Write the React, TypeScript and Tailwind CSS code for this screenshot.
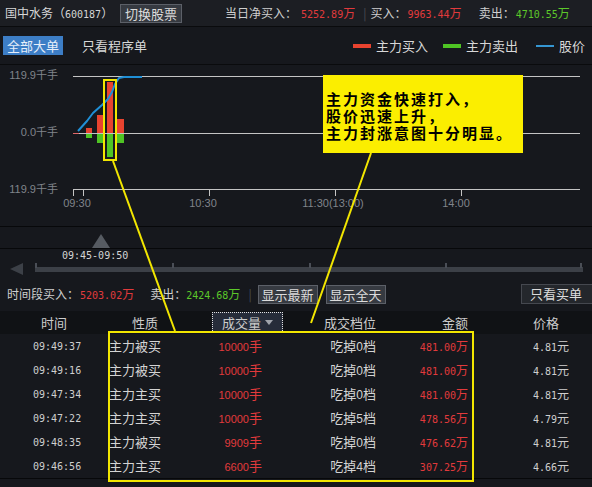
import React from 'react'

// colours picked off the screenshot
const RED = 'text-[#e23a3c]'
const GREEN = 'text-[#5cc82a]'

function Num({ v, unit, color }: { v: string; unit: string; color: string }) {
  return (
    <span className={color}>
      <span className="font-['DejaVu_Sans_Mono',monospace] text-[10px]">{v}</span>
      <span className="text-[12px]">{unit}</span>
    </span>
  )
}

function Btn({ label, className = '' }: { label: string; className?: string }) {
  return (
    <div
      className={`h-[19px] flex items-center justify-center bg-[#363a41] border border-[#5c6068] text-[#dcdcdc] text-[13px] leading-none ${className}`}
    >
      {label}
    </div>
  )
}

const rows = [
  { t: '09:49:37', k: '主力被买', vol: '10000', lv: '0', amt: '481.00', p: '4.81' },
  { t: '09:49:16', k: '主力被买', vol: '10000', lv: '0', amt: '481.00', p: '4.81' },
  { t: '09:47:34', k: '主力主买', vol: '10000', lv: '0', amt: '481.00', p: '4.81' },
  { t: '09:47:22', k: '主力主买', vol: '10000', lv: '5', amt: '478.56', p: '4.79' },
  { t: '09:48:35', k: '主力被买', vol: '9909', lv: '0', amt: '476.62', p: '4.81' },
  { t: '09:46:56', k: '主力主买', vol: '6600', lv: '4', amt: '307.25', p: '4.66' },
]

// buy / sell bars of the big-order chart: x, top of red, bottom of green
const bars = [
  { x: 86, w: 6, top: 128, bot: 138 },
  { x: 97, w: 6, top: 115, bot: 143 },
  { x: 107, w: 6, top: 82, bot: 157 },
  { x: 117, w: 7, top: 119, bot: 143 },
]

function Chart() {
  const ZERO = 133
  return (
    <svg width="592" height="161" className="block">
      <g transform="translate(0,-65)">
        {[76, ZERO, 189].map(y => (
          <line key={y} x1="73" x2="580" y1={y + 0.5} y2={y + 0.5} stroke="#c4c4c4" strokeWidth="1" />
        ))}
        {[73, 83, 209, 335, 461].map(x => (
          <line key={x} x1={x + 0.5} x2={x + 0.5} y1="189" y2="196" stroke="#c4c4c4" strokeWidth="1" />
        ))}
        <g fill="#80848b" fontFamily="Liberation Sans, sans-serif" fontSize="11">
          <text x="58" y="79" textAnchor="end">119.9<tspan fontFamily="Noto Sans CJK SC, sans-serif">千手</tspan></text>
          <text x="58" y="136" textAnchor="end">0.0<tspan fontFamily="Noto Sans CJK SC, sans-serif">千手</tspan></text>
          <text x="58" y="193" textAnchor="end">119.9<tspan fontFamily="Noto Sans CJK SC, sans-serif">千手</tspan></text>
          <text x="77" y="207" textAnchor="middle">09:30</text>
          <text x="203" y="207" textAnchor="middle">10:30</text>
          <text x="333" y="207" textAnchor="middle">11:30(13:00)</text>
          <text x="456" y="207" textAnchor="middle">14:00</text>
        </g>
        <line x1="73" x2="79" y1={ZERO + 0.5} y2={ZERO + 0.5} stroke="#e0686a" strokeWidth="1" />
        {bars.map(b => (
          <g key={b.x}>
            <rect x={b.x} y={b.top} width={b.w} height={ZERO - b.top} fill="#e8432f" />
            <rect x={b.x} y={ZERO + 1} width={b.w} height={b.bot - ZERO - 1} fill="#4fc424" />
          </g>
        ))}
        <polyline
          points="78,131 87,121 93,113 102,105 108,99 112,92 115,84 119,78 124,77 142,77"
          fill="none"
          stroke="#1f8fd6"
          strokeWidth="2"
          strokeLinejoin="round"
        />
        <rect x="104" y="80" width="12" height="80" fill="none" stroke="#f2e600" strokeWidth="2" />
      </g>
    </svg>
  )
}

export default function App() {
  return (
    <div className="relative w-[592px] h-[487px] overflow-hidden bg-[#16181d] text-[12px] text-[#cfcfcf] font-['Noto_Sans_CJK_SC',sans-serif]">
      {/* top bar */}
      <div className="h-[27px] flex items-center bg-[#1c1e23] border-b border-[#0a0b0d] whitespace-nowrap">
        <div className="w-[120px] pl-[5px] text-[#d6d6d6]">
          国中水务（<span className="font-['DejaVu_Sans_Mono',monospace] text-[10px]">600187</span>）
        </div>
        <Btn label="切换股票" className="w-[62px]" />
        <span className="ml-[43px]">当日净买入：</span>
        <span className="ml-[4px]"><Num v="5252.89" unit="万" color={RED} /></span>
        <span className="ml-[8px] text-[#4a4d53]">|</span>
        <span className="ml-[4px]">买入：</span>
        <span className="ml-[1px]"><Num v="9963.44" unit="万" color={RED} /></span>
        <span className="ml-[17px]">卖出：</span>
        <span className="ml-[1px]"><Num v="4710.55" unit="万" color={GREEN} /></span>
      </div>

      {/* filter + legend row */}
      <div className="h-[38px] flex items-center border-b border-[#0a0b0d] whitespace-nowrap">
        <div className="ml-[3px] w-[60px] h-[19px] flex items-center justify-center bg-[#3d7ec6] text-[#e6eefa] text-[13px] leading-none">
          全部大单
        </div>
        <span className="ml-[19px] text-[13px] text-[#d8d8d8]">只看程序单</span>
        <div className="ml-auto mr-[7px] flex items-center text-[13px] text-[#d8d8d8]">
          <span className="w-[18px] h-[4px] bg-[#e8432f]" />
          <span className="ml-[5px]">主力买入</span>
          <span className="ml-[15px] w-[18px] h-[4px] bg-[#4fc424]" />
          <span className="ml-[5px]">主力卖出</span>
          <span className="ml-[18px] w-[18px] h-[2px] bg-[#3596d2]" />
          <span className="ml-[5px]">股价</span>
        </div>
      </div>

      <Chart />

      {/* time window selector */}
      <div className="h-[22px] border-t border-[#07080a]">
        <svg width="592" height="21" className="block">
          <polygon points="92,21 101,7 110,21" fill="#565b62" />
        </svg>
      </div>
      <div className="h-[34px] border-t border-[#07080a]">
        <div className="h-[14px] pl-[62px] leading-[14px] font-['DejaVu_Sans_Mono',monospace] text-[10px] text-[#d4d4d4]">
          09:45-09:50
        </div>
        <svg width="592" height="19" className="block">
          <polygon points="10,6 23,0 23,12" fill="#3c4047" />
          <rect x="35" y="4" width="548" height="5" fill="#3c4047" />
          {[35, 172, 309, 445, 580].map(x => (
            <rect key={x} x={x} y="0" width="2" height="5" fill="#4a4e56" />
          ))}
        </svg>
      </div>

      {/* period stats */}
      <div className="h-[24px] flex items-center whitespace-nowrap">
        <span className="ml-[7px]">时间段买入：</span>
        <span className="ml-[1px]"><Num v="5203.02" unit="万" color={RED} /></span>
        <span className="ml-[16px]">卖出：</span>
        <span><Num v="2424.68" unit="万" color={GREEN} /></span>
        <span className="ml-[8px] text-[#4a4d53]">|</span>
        <Btn label="显示最新" className="ml-[6px] w-[60px]" />
        <Btn label="显示全天" className="ml-[8px] w-[60px]" />
        <div className="ml-auto w-[71px] h-[20px] flex items-center pl-[8px] bg-[#24272c] border border-[#45484f] border-r-0 text-[13px] text-[#dcdcdc]">
          只看买单
        </div>
      </div>

      {/* table */}
      <div className="mt-[5px] h-[23px] flex items-center bg-[#101215] text-[13px] text-[#cccccc] whitespace-nowrap">
        <div className="w-[108px] text-center">时间</div>
        <div className="w-[74px] text-center">性质</div>
        <div className="ml-[30px] w-[71px] h-[21px] flex items-center justify-center gap-[4px] bg-[#262c39] border border-dotted border-[#e0e0e0]">
          成交量
          <svg width="8" height="5"><polygon points="0,0 8,0 4,5" fill="#a0a4ab" /></svg>
        </div>
        <div className="w-[134px] text-center">成交档位</div>
        <div className="w-[51px] text-right">金额</div>
        <div className="ml-[65px]">价格</div>
      </div>
      <div className="border-b border-[#07080a]">
        {rows.map((r, i) => (
          <div key={i} className="h-[24px] flex items-center whitespace-nowrap text-[13px]">
            <div className="w-[108px] pl-[33px] font-['DejaVu_Sans_Mono',monospace] text-[10px] text-[#cfcfcf]">{r.t}</div>
            <div className="w-[92px] pl-[1px] text-[#d4d4d4]">{r.k}</div>
            <div className={`w-[62px] text-right ${RED}`}>
              <span className="font-['Liberation_Sans',sans-serif] text-[11px]">{r.vol}</span>手
            </div>
            <div className="w-[114px] text-right text-[#d4d4d4]">
              吃掉<span className="font-['Liberation_Sans',sans-serif] text-[12px]">{r.lv}</span>档
            </div>
            <div className="w-[92px] text-right"><Num v={r.amt} unit="万" color={RED} /></div>
            <div className="w-[101px] text-right"><Num v={r.p} unit="元" color="text-[#cfcfcf]" /></div>
          </div>
        ))}
      </div>

      {/* annotation callout */}
      <div className="absolute left-[323px] top-[75px] w-[200px] h-[78px] bg-[#fbee00] pl-[3px] pt-[15px] text-[15px] leading-[17px] font-bold tracking-[2px] text-black">
        <div>主力资金快速打入，</div>
        <div>股价迅速上升，</div>
        <div>主力封涨意图十分明显。</div>
      </div>

      {/* highlighted rows */}
      <div className="absolute left-[108px] top-[331px] w-[366px] h-[151px] border-2 border-[#f2e600]" />

      {/* leader lines */}
      <svg className="absolute left-0 top-0 pointer-events-none" width="592" height="487">
        <line x1="113" y1="161" x2="175" y2="331" stroke="#f2e600" strokeWidth="2" />
        <line x1="371" y1="153" x2="311" y2="323" stroke="#f2e600" strokeWidth="2" />
      </svg>
    </div>
  )
}
